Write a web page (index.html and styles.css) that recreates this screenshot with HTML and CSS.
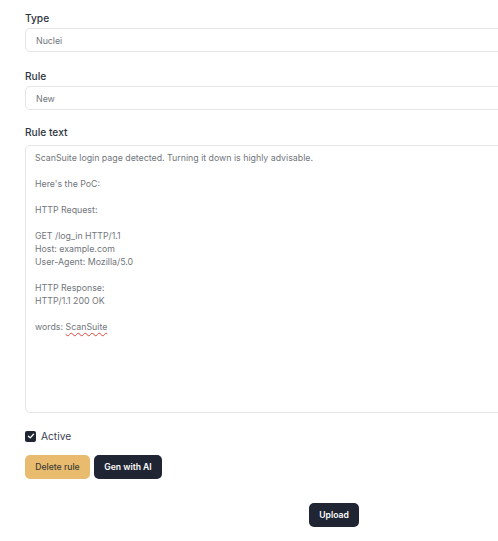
FILE: index.html
```html
<!DOCTYPE html>
<html lang="en">
<head>
<meta charset="utf-8">
<title>Rule editor</title>
<link rel="stylesheet" href="styles.css">
</head>
<body>
<form class="rule-form">
  <div class="field field-type">
    <label class="field-label" for="type">Type</label>
    <input class="field-input" id="type" type="text" value="Nuclei">
  </div>
  <div class="field field-rule">
    <label class="field-label" for="rule">Rule</label>
    <input class="field-input" id="rule" type="text" value="New">
  </div>
  <div class="field field-text">
    <label class="field-label" for="ruletext">Rule text</label>
    <div class="field-area" id="ruletext">ScanSuite login page detected. Turning it down is highly advisable.

Here's the PoC:

HTTP Request:

GET /log_in HTTP/1.1
Host: example.com
User-Agent: Mozilla/5.0

HTTP Response:
HTTP/1.1 200 OK

words: <span class="misspelled">ScanSuite</span></div>
  </div>
  <label class="check">
    <span class="check-box">
      <svg viewBox="0 0 12 12" width="8" height="8"><path d="M2.2 6.3 4.8 8.8 9.8 3.4" fill="none" stroke="#fff" stroke-width="2" stroke-linecap="round" stroke-linejoin="round"/></svg>
    </span>
    <span class="check-label">Active</span>
  </label>
  <div class="actions">
    <button type="button" class="btn btn-warn">Delete rule</button>
    <button type="button" class="btn btn-dark">Gen with AI</button>
  </div>
  <div class="submit-row">
    <button type="button" class="btn btn-dark btn-upload">Upload</button>
  </div>
</form>
</body>
</html>
```
FILE: styles.css
```css
html, body {
  margin: 0;
  padding: 0;
  background: #fff;
  overflow: hidden;
}

body {
  font-family: Inter, "Noto Sans", sans-serif;
  color: #1f2937;
}

.rule-form {
  width: 618px;
  padding: 10px 0 0 25px;
  display: flex;
  flex-direction: column;
}

.field {
  display: flex;
  flex-direction: column;
}

.field-label {
  font-size: 10.2px;
  line-height: 16px;
  font-weight: 500;
  color: #2d3440;
  margin-bottom: 2px;
}

.field-rule { margin-top: 16px; }
.field-text { margin-top: 14px; }
.field-text .field-label { margin-bottom: 5px; }

.field-input {
  box-sizing: border-box;
  height: 24px;
  border: 1px solid #e4e5e9;
  border-radius: 5px;
  padding: 0 10px;
  font-family: inherit;
  font-size: 8.8px;
  color: #72767d;
  background: #fff;
  outline: none;
}

.field-area {
  box-sizing: border-box;
  height: 268px;
  border: 1px solid #e4e5e9;
  border-radius: 5px;
  padding: 5px 9px;
  font-size: 8.8px;
  line-height: 13px;
  color: #72767d;
  white-space: pre-wrap;
}

.misspelled {
  text-decoration: underline wavy #e0453c;
  text-decoration-thickness: 1px;
  text-underline-offset: 2px;
}

.check {
  display: flex;
  align-items: center;
  gap: 5px;
  margin-top: 16px;
  height: 14px;
}

.check-box {
  width: 11px;
  height: 11px;
  border-radius: 2px;
  background: #1f2533;
  display: flex;
  align-items: center;
  justify-content: center;
}

.check-label {
  font-size: 10.2px;
  color: #3b4150;
}

.actions {
  display: flex;
  gap: 4px;
  margin-top: 12px;
}

.btn {
  box-sizing: border-box;
  height: 24px;
  border: 0;
  border-radius: 5px;
  padding: 0;
  font-family: inherit;
  font-size: 8.6px;
  font-weight: 600;
  white-space: nowrap;
  text-align: center;
  cursor: pointer;
}

.btn-warn {
  width: 65px;
  background: #e8bb6e;
  color: #3e3b36;
  font-weight: 500;
}

.btn-dark {
  background: #1f2533;
  color: #fff;
}

.actions .btn-dark { width: 68px; }

.submit-row {
  display: flex;
  justify-content: center;
  margin-top: 24px;
}

.btn-upload {
  width: 50px;
}
```
